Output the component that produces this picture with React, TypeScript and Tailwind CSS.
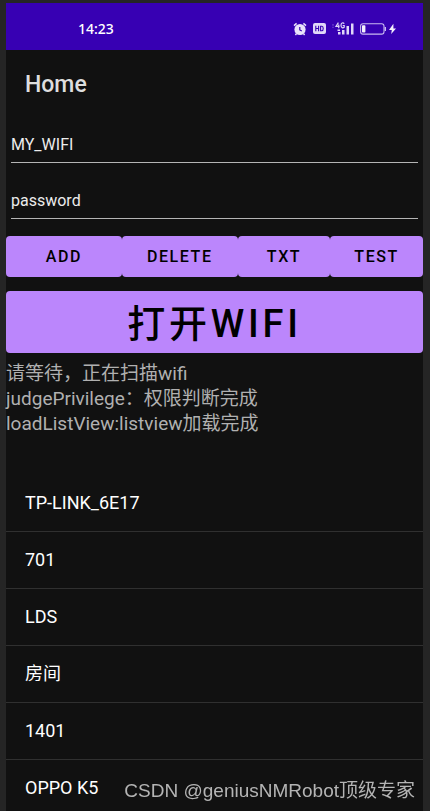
import React, { useState } from "react";

const NETWORKS = ["TP-LINK_6E17", "701", "LDS", "房间", "1401", "OPPO K5"];

const LOGS = [
  "请等待，正在扫描wifi",
  "judgePrivilege：权限判断完成",
  "loadListView:listview加载完成",
];

const SvgAlarm: React.FC = () => (
  <svg width="14" height="14" viewBox="0 0 14 14" fill="none">
    <circle cx="7" cy="7.5" r="5.6" fill="#e9e2fb" />
    <path
      d="M1 3.6 3.6 1.4M13 3.6 10.4 1.4M3.4 11.8 2.4 13M10.6 11.8l1 1.2"
      stroke="#e9e2fb"
      strokeWidth="1.5"
    />
    <path d="M6.8 5v3l2 1" stroke="#3700b3" strokeWidth="1.2" />
  </svg>
);

const SvgHd: React.FC = () => (
  <svg width="13" height="11" viewBox="0 0 13 11" fill="none">
    <rect width="13" height="11" rx="2" fill="#e0d7f8" />
    <path
      d="M2.8 2.8v5.4M5.6 2.8v5.4M2.8 5.5h2.8M7.6 3.3v4.4h1.2c1.9 0 1.9-4.4 0-4.4z"
      stroke="#3700b3"
      strokeWidth="1.1"
    />
  </svg>
);

const SvgSignal: React.FC = () => (
  <svg width="22" height="13" viewBox="0 0 22 13" fill="none">
    <path d="M1 2.2v1.4M1 4.8v1" stroke="#8d6bdb" strokeWidth="1" />
    <path
      d="M6.4.6 4 4.3h3.6M6.7 2.4v3.8M12.3 1.6C11 .2 9 .8 9 3.3s1.9 3 3.2 2V3.5h-1.5"
      stroke="#e0d7f8"
      strokeWidth="1.2"
    />
    <path
      d="M5.5 7.5H8V9H5.5zM6 10h2.5v2.5H6zM10 8h2.5v4.500H10zM14.5 4H17v8.500h-2.500zM19 1.500h2.500v11H19z"
      fill="#e0d7f8"
    />
  </svg>
);

const SvgBattery: React.FC = () => (
  <svg width="37" height="12" viewBox="0 0 37 12" fill="none">
    <rect x=".6" y=".7" width="23.4" height="10.4" rx="2.4" stroke="#c9b9f1" strokeWidth="1.1" />
    <rect x="2" y="2.2" width="3.4" height="7.4" rx=".8" fill="#f4f0fd" />
    <path d="M25.3 4v4" stroke="#c9b9f1" strokeWidth="1.4" />
    <path d="M33.4.8 29 7h2.8L31.2 11 36 5.4h-2.6z" fill="#f4f0fd" />
  </svg>
);

const StatusBar: React.FC = () => (
  <div className="flex h-[47px] items-center justify-between bg-[#3700b3] pt-1 pr-[26px] pl-[72px]">
    <span className="font-['Noto_Sans',sans-serif] text-[14px] font-medium text-white">
      14:23
    </span>
    <div className="flex items-center gap-[6px]">
      <SvgAlarm />
      <SvgHd />
      <SvgSignal />
      <SvgBattery />
    </div>
  </div>
);

const Field: React.FC<{
  label: string;
  value: string;
  onChange: (value: string) => void;
}> = ({ label, value, onChange }) => (
  <input
    type="text"
    aria-label={label}
    value={value}
    onChange={(e) => onChange(e.target.value)}
    className="block h-9 w-full border-b border-[#b5b5b5] text-base text-[#ececec] outline-none"
  />
);

const App: React.FC = () => {
  const [ssid, setSsid] = useState("MY_WIFI");
  const [password, setPassword] = useState("password");

  return (
    <div className="h-screen overflow-hidden bg-[#252525] pt-[3px] pr-[7px] pl-[6px] font-[Roboto,'Noto_Sans_CJK_SC',sans-serif]">
      <div className="flex min-h-full flex-col bg-[#111111]">
        <StatusBar />
        <h1 className="px-[19px] pt-[21px] pb-5 text-[23px] leading-7 font-medium text-[#dedede]">
          Home
        </h1>
        <div className="flex flex-col gap-5 px-[5px] pt-2">
          <Field label="SSID" value={ssid} onChange={setSsid} />
          <Field label="Password" value={password} onChange={setPassword} />
        </div>

        <div className="mt-[17px] flex h-[41px] text-base font-medium tracking-widest text-black">
          <button className="flex-[5] rounded bg-[#bb86fc]">ADD</button>
          <button className="flex-[5] rounded bg-[#bb86fc]">DELETE</button>
          <button className="flex-[4] rounded bg-[#bb86fc]">TXT</button>
          <button className="flex-[4] rounded bg-[#bb86fc]">TEST</button>
        </div>
        <button className="mt-[14px] h-[62px] rounded bg-[#bb86fc] pt-1 text-[38px] font-medium tracking-widest text-black">
          打开WIFI
        </button>

        <div className="mt-2 text-[19px] leading-[25px] text-[#b0b0b0]">
          {LOGS.map((line) => (
            <p key={line}>{line}</p>
          ))}
        </div>

        <ul className="mt-[39px]">
          {NETWORKS.map((name) => (
            <li
              key={name}
              className="flex h-[57px] items-center border-b border-[#303030] px-[19px] text-lg text-white"
            >
              {name}
            </li>
          ))}
        </ul>
      </div>
      <div className="fixed right-[15px] bottom-1 font-['Liberation_Sans','Noto_Sans_CJK_SC',sans-serif] text-[19px] leading-8 text-[#b4b4b4]">
        CSDN @geniusNMRobot顶级专家
      </div>
    </div>
  );
};

export default App;
